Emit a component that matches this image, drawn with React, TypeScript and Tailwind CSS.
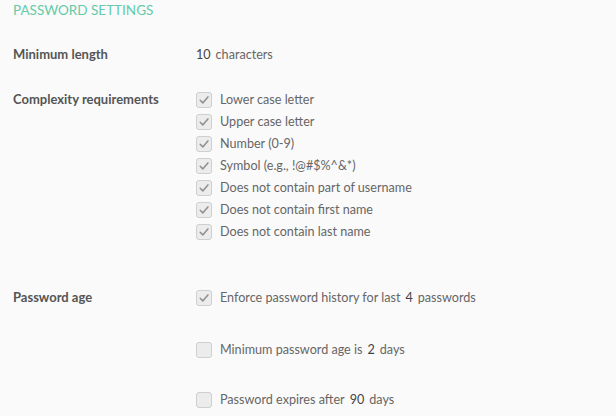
import React from "react";

const complexity = [
  "Lower case letter",
  "Upper case letter",
  "Number (0-9)",
  "Symbol (e.g., !@#$%^&*)",
  "Does not contain part of username",
  "Does not contain first name",
  "Does not contain last name",
];

function Box({ checked }: { checked: boolean }) {
  return (
    <span className="flex h-[16px] w-[16px] shrink-0 items-center justify-center rounded-[3px] border border-[#cfcfcf] bg-[#ececec]">
      {checked && (
        <svg width="12" height="12" viewBox="0 0 12 12" fill="none">
          <path d="M2.2 6.3 L4.8 8.9 L9.9 2.9" stroke="#8f8f8f" strokeWidth="1.5" strokeLinecap="round" strokeLinejoin="round" />
        </svg>
      )}
    </span>
  );
}

function Check({ checked, children }: { checked: boolean; children: React.ReactNode }) {
  return (
    <div className="flex h-[22px] items-center gap-[8px]">
      <Box checked={checked} />
      <span className="whitespace-nowrap">{children}</span>
    </div>
  );
}

function Num({ children }: { children: React.ReactNode }) {
  return <span className="mx-[5px] text-[#444]">{children}</span>;
}

export default function App() {
  return (
    <div
      className="h-[416px] w-[616px] overflow-hidden bg-[#fafafa] px-[13px] pt-[1px] text-[12.6px] text-[#666]"
      style={{ fontFamily: "Lato, 'Open Sans', sans-serif" }}
    >
      <div className="text-[13.5px] uppercase leading-[18px] text-[#63cba9]">Password settings</div>

      <div className="mt-[25px] flex h-[22px] items-center">
        <div className="w-[183px] text-[13px] font-bold text-[#555]">Minimum length</div>
        <div>
          <span className="mr-[5px] text-[#444]">10</span>characters
        </div>
      </div>

      <div className="mt-[23px] flex">
        <div className="flex h-[22px] w-[183px] items-center text-[13px] font-bold text-[#555]">Complexity requirements</div>
        <div className="flex flex-col">
          {complexity.map((c) => (
            <Check key={c} checked>
              {c}
            </Check>
          ))}
        </div>
      </div>

      <div className="mt-[44px] flex">
        <div className="flex h-[22px] w-[183px] items-center text-[13px] font-bold text-[#555]">Password age</div>
        <div className="flex flex-col">
          <Check checked>
            Enforce password history for last<Num>4</Num>passwords
          </Check>
          <div className="mt-[30px]">
            <Check checked={false}>
              Minimum password age is<Num>2</Num>days
            </Check>
          </div>
          <div className="mt-[28px]">
            <Check checked={false}>
              Password expires after<Num>90</Num>days
            </Check>
          </div>
        </div>
      </div>
    </div>
  );
}
